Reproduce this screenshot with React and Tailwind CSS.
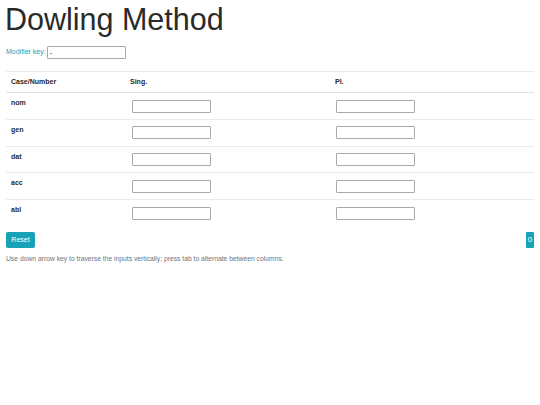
import React from "react";

const rows = ["nom", "gen", "dat", "acc", "abl"];

function Inp() {
  return (
    <input
      type="text"
      className="block w-[79px] h-[13px] border border-[#a9a9a9] rounded-[1px] bg-white text-[7px] px-[2px] outline-none"
    />
  );
}

export default function App() {
  return (
    <div
      className="w-[540px] min-h-[405px] bg-white text-[#2a2a2a] px-[6px]"
      style={{ fontFamily: '"Liberation Sans", Arial, sans-serif' }}
    >
      <h1 className="text-[30.5px] leading-[36px] pt-[1px] font-normal m-0 ml-[-1px]">Dowling Method</h1>
      <div className="mt-[9px] flex items-center h-[13px] text-[7px]">
        <span className="text-[#17a2b8] mr-[1px]">Modifier key:</span>
        <input
          type="text"
          defaultValue="-"
          className="w-[79px] h-[13px] border border-[#a9a9a9] rounded-[1px] text-[7px] px-[2px] outline-none"
        />
      </div>
      <table className="mt-[12px] w-[528px] border-collapse text-[7px] table-fixed">
        <colgroup>
          <col className="w-[119px]" />
          <col className="w-[205px]" />
          <col />
        </colgroup>
        <thead>
          <tr className="border-t border-[#e9ecef] border-b border-b-[#dee2e6]">
            <th className="text-left font-bold h-[21px] px-[5px] align-middle">Case/Number</th>
            <th className="text-left font-bold px-[5px] align-middle">Sing.</th>
            <th className="text-left font-bold px-[5px] align-middle">Pl.</th>
          </tr>
        </thead>
        <tbody>
          {rows.map((r, i) => (
            <tr key={r} className={i > 0 ? "border-t border-[#e9ecef]" : ""}>
              <td className="font-bold px-[5px] pt-[6px] pb-[6.5px] align-top leading-[8px]">{r}</td>
              <td className="pl-[7px] pt-[6.5px] pb-[6.25px] align-top">
                <Inp />
              </td>
              <td className="pl-[6px] pt-[6.5px] pb-[6.25px] align-top">
                <Inp />
              </td>
            </tr>
          ))}
        </tbody>
      </table>
      <div className="mt-[6px] flex items-start justify-between w-[528px]">
        <button className="w-[29px] h-[16px] bg-[#17a2b8] text-white text-[7px] rounded-[2px] flex items-center justify-center">
          Reset
        </button>
        <span className="w-[8px] h-[16px] bg-[#17a2b8] text-white text-[8px] rounded-[1px] flex items-center justify-center">
          0
        </span>
      </div>
      <p className="mt-[7px] text-[6.75px] text-[#6c757d] leading-[8px]">
        Use down arrow key to traverse the inputs vertically; press tab to alternate between columns.
      </p>
    </div>
  );
}
